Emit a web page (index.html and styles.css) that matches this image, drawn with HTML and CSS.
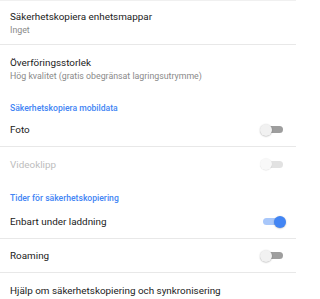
FILE: index.html
```html
<!DOCTYPE html>
<html lang="sv">
<head>
<meta charset="utf-8">
<link rel="stylesheet" href="styles.css">
</head>
<body>
<div class="list">
  <div class="row two divider first">
    <div class="title">Säkerhetskopiera enhetsmappar</div>
    <div class="sub">Inget</div>
  </div>
  <div class="row two second">
    <div class="title">Överföringsstorlek</div>
    <div class="sub">Hög kvalitet (gratis obegränsat lagringsutrymme)</div>
  </div>
  <div class="header h1">Säkerhetskopiera mobildata</div>
  <div class="row one divider">
    <div class="title">Foto</div>
    <span class="switch"><span class="track"></span><span class="thumb"></span></span>
  </div>
  <div class="row one disabled">
    <div class="title">Videoklipp</div>
    <span class="switch"><span class="track"></span><span class="thumb"></span></span>
  </div>
  <div class="header h2">Tider för säkerhetskopiering</div>
  <div class="row one divider">
    <div class="title">Enbart under laddning</div>
    <span class="switch on"><span class="track"></span><span class="thumb"></span></span>
  </div>
  <div class="row one divider">
    <div class="title">Roaming</div>
    <span class="switch"><span class="track"></span><span class="thumb"></span></span>
  </div>
  <div class="row one">
    <div class="title">Hjälp om säkerhetskopiering och synkronisering</div>
  </div>
</div>
</body>
</html>
```
FILE: styles.css
```css
* { box-sizing: border-box; }
html, body { margin: 0; padding: 0; background: #fff; }
body { font-family: Roboto, "Noto Sans", sans-serif; overflow: hidden; }
.list { width: 296px; border-top: 1px solid #f0f0f0; }
.row { display: flex; padding: 0 10px; }
.divider { border-bottom: 1px solid #e8e8e8; }
.row.two { flex-direction: column; justify-content: center; }
.row.first { height: 44px; }
.row.second { height: 47px; }
.row.one { height: 34px; align-items: center; justify-content: space-between; }
.title { font-size: 9.9px; color: #212121; line-height: 13px; white-space: nowrap; }
.sub { font-size: 8.8px; color: #8a8a8a; line-height: 12px; margin-top: 1px; white-space: nowrap; }
.header { font-size: 8.6px; font-weight: 500; color: #4285f4; padding: 10px 10px 0; height: 21px; line-height: 12px; }
.h2 { height: 24px; padding-top: 11px; }
.disabled .title { color: #bdbdbd; }
.switch { position: relative; width: 26px; height: 12px; flex: none; }
.track { position: absolute; left: 3px; right: 3px; top: 2.5px; height: 7px; border-radius: 4px; background: #9e9e9e; }
.thumb { position: absolute; left: 0; top: 0; width: 12px; height: 12px; border-radius: 50%; background: #f1f1f1; box-shadow: 0 0.5px 1.5px rgba(0,0,0,0.3); }
.switch.on .track { background: #a8c7fa; }
.switch.on .thumb { left: 14px; background: #4285f4; }
.disabled .track { background: #e2e2e2; }
.disabled .thumb { background: #f8f8f8; box-shadow: 0 0.5px 1px rgba(0,0,0,0.12); }
```
